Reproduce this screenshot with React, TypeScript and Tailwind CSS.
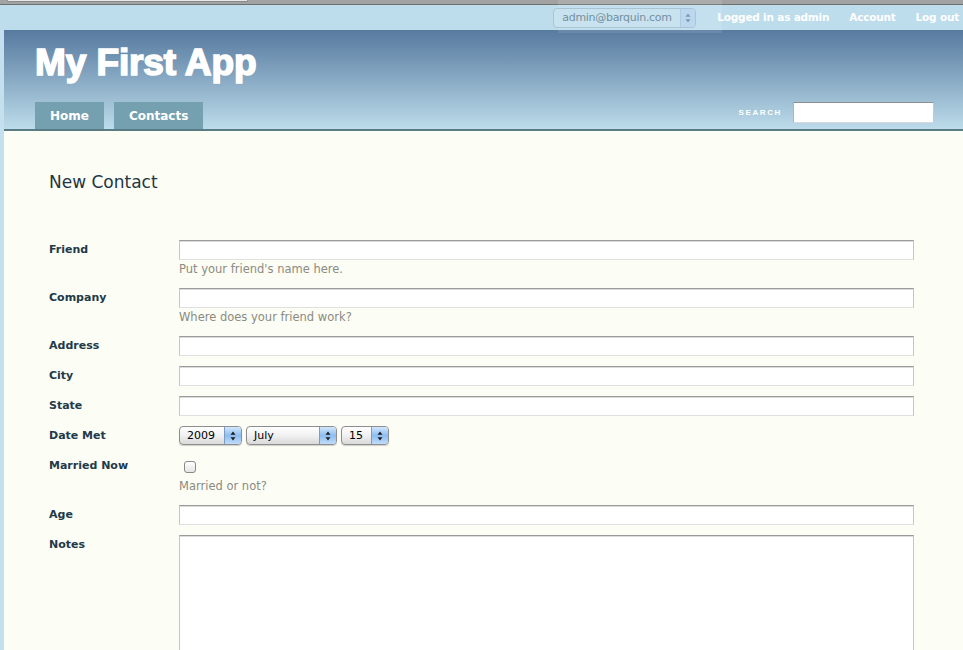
const font = "font-['DejaVu_Sans',sans-serif]";

function TextInput() {
  return (
    <input
      type="text"
      className="block h-[20px] w-[735px] border border-t-[#9a9a9a] border-r-[#c6c6c6] border-b-[#e0e0e0] border-l-[#c6c6c6] bg-white shadow-[inset_0_1px_0_#dcdcdc] outline-none"
    />
  );
}

function Arrows({ color = "#1c1c1c" }: { color?: string }) {
  return (
    <svg width="6" height="10" viewBox="0 0 6 10">
      <path d="M3 0.5 L5.5 3.8 L0.5 3.8 Z" fill={color} />
      <path d="M3 9.5 L5.5 6.2 L0.5 6.2 Z" fill={color} />
    </svg>
  );
}

function AquaSelect({ value, width }: { value: string; width: string }) {
  return (
    <div
      className={`flex h-[19px] ${width} items-stretch overflow-hidden rounded-[4px] border border-[#8e8e8e] bg-linear-to-b from-white via-[#f1f1f1] to-[#d9d9d9] shadow-[0_1px_1px_rgba(0,0,0,0.18)]`}
    >
      <span className="flex-1 pl-[7px] text-[11px] leading-[17px] text-black">{value}</span>
      <span className="flex w-[17px] items-center justify-center border-l border-[#7b9cc4] bg-linear-to-b from-[#d2e7fc] via-[#8ebdf0] to-[#c0dcfa]">
        <Arrows />
      </span>
    </div>
  );
}

function Row({
  label,
  hint,
  children,
}: {
  label: string;
  hint?: string;
  children: React.ReactNode;
}) {
  return (
    <div className="mb-[10px] flex items-start">
      <label className="w-[130px] shrink-0 text-[11px] font-bold leading-[20px] text-[#22394a]">
        {label}
      </label>
      <div>
        {children}
        {hint && (
          <div className="text-[11.5px] leading-[18px] text-[#8b8b83]">{hint}</div>
        )}
      </div>
    </div>
  );
}

export default function App() {
  return (
    <div className={`min-h-screen bg-[#c4e0ee] ${font}`}>
      {/* window chrome strip */}
      <div className="h-[5px] border-b border-[#6f6f6f] bg-[#a2a2a2]">
        <div className="ml-[7px] h-[2px] w-[241px] rounded-b-[2px] border border-t-0 border-[#8a8a8a] bg-[#e6e6e6]" />
      </div>

      {/* top bar */}
      <div className="relative flex h-[25px] items-center justify-end bg-[#bddcec] pr-[4px]">
        <div className="pointer-events-none absolute -top-[5px] left-[558px] h-[33px] w-[164px] bg-white/10" />
        <div className="relative mr-[21px] flex h-[20px] w-[143px] items-stretch overflow-hidden rounded-[4px] border border-[#a9c4d3] bg-[#c8e2ef]">
          <span className="flex-1 pl-[8px] text-[11px] leading-[18px] tracking-[-0.3px] text-[#7391a1]">
            admin@barquin.com
          </span>
          <span className="flex w-[15px] items-center justify-center border-l border-[#b0cbe0] bg-[#bcd8f0]">
            <Arrows color="#7d97ab" />
          </span>
        </div>
        <nav className="flex items-center gap-[20px] text-[10.5px] font-bold tracking-[-0.2px] text-white">
          <a href="#">Logged in as admin</a>
          <a href="#">Account</a>
          <a href="#">Log out</a>
        </nav>
      </div>

      <div className="pl-[4px]">
        {/* header */}
        <header className="border-b-2 border-[#587b84] bg-linear-to-b from-[#577a9f] to-[#bddcea]">
          <div className="h-[99px] pl-[31px]">
            <h1 className="pt-[15px] font-['Liberation_Sans',Arial,sans-serif] text-[37px] font-bold leading-[36px] tracking-[-0.1px] text-white [-webkit-text-stroke:1.6px_white]">
              My First App
            </h1>
            <div className="mt-[21px] flex items-start justify-between pr-[29px]">
              <div className="flex gap-[10px]">
                <a href="#" className="flex h-[27px] items-center bg-[#74a0b0] px-[15px] text-[12px] font-bold text-white">
                  Home
                </a>
                <a href="#" className="flex h-[27px] items-center bg-[#74a0b0] px-[15px] text-[12px] font-bold text-white">
                  Contacts
                </a>
              </div>
              <div className="flex items-center gap-[11px]">
                <span className="font-['Liberation_Sans',Arial,sans-serif] text-[8px] font-bold tracking-[1.6px] text-white">
                  SEARCH
                </span>
                <input
                  type="text"
                  className="h-[21px] w-[141px] border border-t-[#8f8f8f] border-r-[#c8c8c8] border-b-[#d8d8d8] border-l-[#b5b5b5] bg-white outline-none"
                />
              </div>
            </div>
          </div>
        </header>

        {/* content */}
        <main className="bg-[#fcfdf4] px-[45px] pt-[41px] pb-[40px]">
          <h2 className="text-[17px] leading-[20px] text-[#1f3644]">New Contact</h2>

          <form className="mt-[48px]">
            <Row label="Friend" hint="Put your friend's name here.">
              <TextInput />
            </Row>
            <Row label="Company" hint="Where does your friend work?">
              <TextInput />
            </Row>
            <Row label="Address">
              <TextInput />
            </Row>
            <Row label="City">
              <TextInput />
            </Row>
            <Row label="State">
              <TextInput />
            </Row>
            <Row label="Date Met">
              <div className="flex h-[20px] items-start gap-[4px]">
                <AquaSelect value="2009" width="w-[63px]" />
                <AquaSelect value="July" width="w-[91px]" />
                <AquaSelect value="15" width="w-[48px]" />
              </div>
            </Row>
            <Row label="Married Now" hint="Married or not?">
              <div className="flex h-[21px] items-center pl-[5px]">
                <span className="block h-[12px] w-[12px] rounded-[3px] border border-[#8a8a8a] bg-linear-to-b from-white to-[#e4e4e4]" />
              </div>
            </Row>
            <Row label="Age">
              <TextInput />
            </Row>
            <Row label="Notes">
              <textarea className="block h-[140px] w-[735px] resize-none border border-t-[#9a9a9a] border-r-[#c6c6c6] border-b-[#e0e0e0] border-l-[#c6c6c6] bg-white shadow-[inset_0_1px_0_#dcdcdc] outline-none" />
            </Row>
          </form>
        </main>
      </div>
    </div>
  );
}
